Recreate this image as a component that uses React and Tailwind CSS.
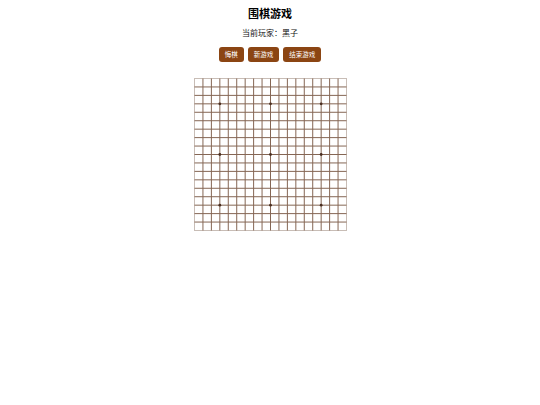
export default function App() {
  const n = 19;
  const step = 152 / 18;
  const lines = [];
  for (let i = 1; i < n - 1; i++) {
    const p = i * step + 0.5;
    lines.push(<line key={"v" + i} x1={p} y1={0.5} x2={p} y2={152.5} stroke="#856654" strokeWidth="1" />);
    lines.push(<line key={"h" + i} x1={0.5} y1={p} x2={152.5} y2={p} stroke="#856654" strokeWidth="1" />);
  }
  const stars = [];
  [3, 9, 15].forEach((a) => [3, 9, 15].forEach((b) => {
    stars.push(<circle key={a + "-" + b} cx={a * step + 0.5} cy={b * step + 0.5} r="1.4" fill="#4a2e20" />);
  }));
  return (
    <div className="w-[540px] h-[405px] bg-white flex flex-col items-center" style={{ fontFamily: '"Noto Sans CJK SC", "Noto Sans", sans-serif' }}>
      <h1 className="mt-[6px] text-[11px] font-bold leading-[14px] text-black">围棋游戏</h1>
      <p className="mt-[7px] text-[8px] leading-[12px] text-[#111]">当前玩家：黑子</p>
      <div className="mt-[8px] flex gap-[4px]">
        <button className="h-[15px] px-[6px] rounded-[3px] bg-[#8b4513] text-white text-[6.5px] leading-[15px]">悔棋</button>
        <button className="h-[15px] px-[6px] rounded-[3px] bg-[#8b4513] text-white text-[6.5px] leading-[15px]">新游戏</button>
        <button className="h-[15px] px-[6px] rounded-[3px] bg-[#8b4513] text-white text-[6.5px] leading-[15px]">结束游戏</button>
      </div>
      <div className="mt-[16px]">
        <svg width="153" height="153" viewBox="0 0 153 153" className="block">
          <rect x="0.5" y="0.5" width="152" height="152" fill="#ffffff" stroke="#c8bdb6" strokeWidth="1" />
          {lines}
          {stars}
        </svg>
      </div>
    </div>
  );
}
